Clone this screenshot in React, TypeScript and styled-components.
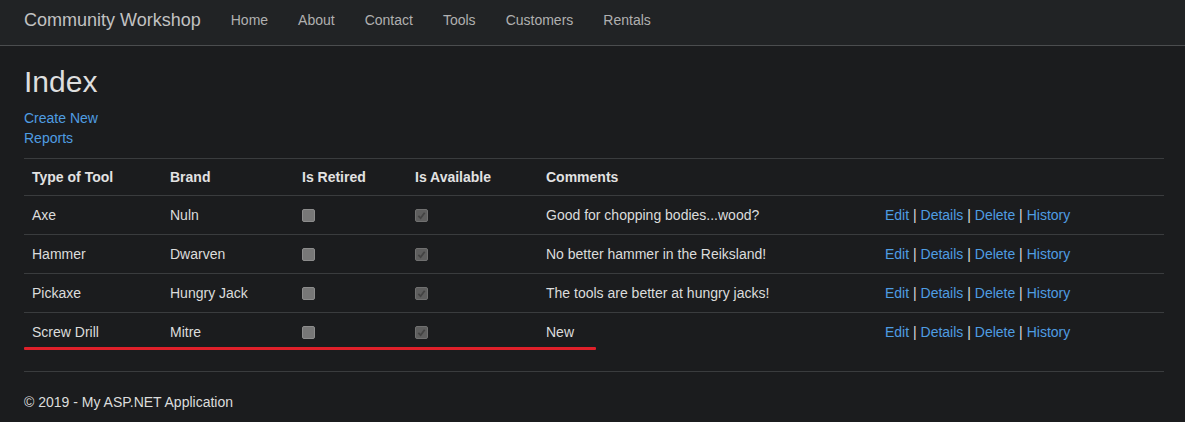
import React from 'react';
import styled, { createGlobalStyle } from 'styled-components';

const GlobalStyle = createGlobalStyle`
  html, body {
    margin: 0;
    padding: 0;
    background-color: #1b1c1e;
  }
  body {
    font-family: "Liberation Sans", Arial, sans-serif;
    font-size: 14px;
    line-height: 20px;
    color: #dcdcdc;
  }
`;

type Tool = {
  type: string;
  brand: string;
  retired: boolean;
  available: boolean;
  comments: string;
};

const tools: Tool[] = [
  { type: 'Axe', brand: 'Nuln', retired: false, available: true, comments: 'Good for chopping bodies...wood?' },
  { type: 'Hammer', brand: 'Dwarven', retired: false, available: true, comments: 'No better hammer in the Reiksland!' },
  { type: 'Pickaxe', brand: 'Hungry Jack', retired: false, available: true, comments: 'The tools are better at hungry jacks!' },
  { type: 'Screw Drill', brand: 'Mitre', retired: false, available: true, comments: 'New' },
];

const navItems = ['Home', 'About', 'Contact', 'Tools', 'Customers', 'Rentals'];

export default function App() {
  return (
    <>
      <GlobalStyle />
      <Navbar>
        <Brand href="#">Community Workshop</Brand>
        <NavLinks>
          {navItems.map((n) => (
            <NavLink key={n} href="#">{n}</NavLink>
          ))}
        </NavLinks>
      </Navbar>
      <Main>
        <Heading>Index</Heading>
        <LinkList>
          <BlueLink href="#">Create New</BlueLink>
          <BlueLink href="#">Reports</BlueLink>
        </LinkList>
        <TableWrap>
          <Table>
            <colgroup>
              <col style={{ width: 138 }} />
              <col style={{ width: 132 }} />
              <col style={{ width: 113 }} />
              <col style={{ width: 131 }} />
              <col style={{ width: 339 }} />
              <col />
            </colgroup>
            <thead>
              <tr>
                <Th>Type of Tool</Th>
                <Th>Brand</Th>
                <Th>Is Retired</Th>
                <Th>Is Available</Th>
                <Th>Comments</Th>
                <Th />
              </tr>
            </thead>
            <tbody>
              {tools.map((t) => (
                <tr key={t.type}>
                  <Td>{t.type}</Td>
                  <Td>{t.brand}</Td>
                  <Td><Checkbox $checked={t.retired} /></Td>
                  <Td>
                    <Checkbox $checked={t.available}>
                      {t.available && (
                        <svg width="9" height="9" viewBox="0 0 10 10">
                          <path d="M1.5 5.5 L4 8 L8.5 2" fill="none" stroke="#434343" strokeWidth="2" />
                        </svg>
                      )}
                    </Checkbox>
                  </Td>
                  <Td>{t.comments}</Td>
                  <Td>
                    <BlueLink href="#">Edit</BlueLink> | <BlueLink href="#">Details</BlueLink> |{' '}
                    <BlueLink href="#">Delete</BlueLink> | <BlueLink href="#">History</BlueLink>
                  </Td>
                </tr>
              ))}
            </tbody>
          </Table>
          <Underline />
        </TableWrap>
        <Rule />
        <Footer>© 2019 - My ASP.NET Application</Footer>
      </Main>
    </>
  );
}

const Navbar = styled.nav`
  height: 46px;
  box-sizing: border-box;
  background-color: #212325;
  border-bottom: 1px solid #4b4d4f;
  display: flex;
  align-items: center;
  padding: 0 0 5px 24px;
`;

const Brand = styled.a`
  font-size: 18px;
  color: #c2c2c2;
  text-decoration: none;
  margin-right: 15px;
`;

const NavLinks = styled.div`
  display: flex;
`;

const NavLink = styled.a`
  font-size: 14px;
  color: #b0b0b0;
  text-decoration: none;
  padding: 0 15px;
`;

const Main = styled.main`
  padding: 0 21px 0 24px;
`;

const Heading = styled.h2`
  font-size: 30px;
  font-weight: 500;
  line-height: 33px;
  color: #dedede;
  margin: 19px 0 10px;
`;

const LinkList = styled.div`
  display: flex;
  flex-direction: column;
  align-items: flex-start;
  margin-bottom: 10px;
`;

const BlueLink = styled.a`
  color: #4f9de2;
  text-decoration: none;
`;

const TableWrap = styled.div`
  position: relative;
  margin-bottom: 20px;
`;

const Table = styled.table`
  width: 100%;
  border-collapse: collapse;
  table-layout: fixed;
  border-top: 1px solid #3a3c3e;
`;

const Th = styled.th`
  text-align: left;
  font-weight: bold;
  color: #e2e2e2;
  height: 36px;
  padding: 0 8px;
  border-bottom: 1px solid #3a3c3e;
`;

const Td = styled.td`
  height: 38px;
  padding: 0 8px;
  border-top: 1px solid #3a3c3e;
  color: #dcdcdc;
  white-space: nowrap;
  vertical-align: middle;

  tr:first-child > & {
    border-top: none;
  }
`;

const Checkbox = styled.span<{ $checked: boolean }>`
  display: inline-flex;
  align-items: center;
  justify-content: center;
  width: 11px;
  height: 11px;
  border: 1px solid ${(p) => (p.$checked ? '#707070' : '#8c8c8c')};
  border-radius: 2px;
  background-color: ${(p) => (p.$checked ? '#5e5e5e' : '#777777')};
  vertical-align: middle;
  margin-top: -2px;
`;

const Underline = styled.div`
  position: absolute;
  left: 0;
  bottom: 1px;
  width: 572px;
  height: 3px;
  background-color: #e0202a;
  border-radius: 1px;
`;

const Rule = styled.hr`
  border: none;
  border-top: 1px solid #3a3c3e;
  margin: 0;
`;

const Footer = styled.footer`
  padding: 20px 0;
  color: #dcdcdc;
`;
